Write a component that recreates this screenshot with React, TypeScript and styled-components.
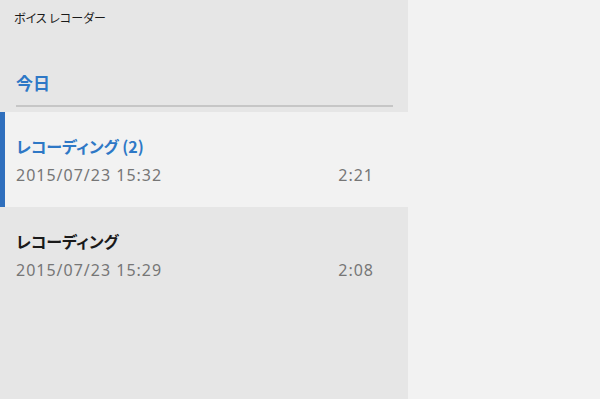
import React from "react";
import styled, { createGlobalStyle } from "styled-components";

const Global = createGlobalStyle`
  html, body { margin: 0; padding: 0; background: #f2f2f2; }
  body { font-family: "Noto Sans", "Noto Sans CJK JP", sans-serif; }
`;

const Page = styled.div`
  display: flex;
  width: 600px;
  height: 399px;
  background: #f2f2f2;
  overflow: hidden;
`;

const Sidebar = styled.div`
  width: 408px;
  height: 100%;
  background: #e6e6e6;
  display: flex;
  flex-direction: column;
`;

const AppTitle = styled.div`
  font-family: "Noto Sans CJK JP", sans-serif;
  font-feature-settings: "palt";
  font-size: 12px;
  line-height: 16px;
  color: #1a1a1a;
  padding: 10px 0 0 14px;
  height: 26px;
  box-sizing: border-box;
`;

const GroupHeader = styled.div`
  margin: 0 15px 0 16px;
  padding: 45px 0 10px;
  border-bottom: 2px solid #c6c6c6;
  font-family: "Noto Sans CJK JP", sans-serif;
  font-weight: 700;
  font-size: 17px;
  line-height: 24px;
  color: #2e78c6;
`;

const List = styled.div`
  margin-top: 5px;
  display: flex;
  flex-direction: column;
`;

const Item = styled.div<{ $selected?: boolean }>`
  height: 95px;
  box-sizing: border-box;
  background: ${(p) => (p.$selected ? "#f2f2f2" : "transparent")};
  border-left: 5px solid ${(p) => (p.$selected ? "#2f6fbd" : "transparent")};
  padding: 23px 34px 0 11px;
  display: flex;
  flex-direction: column;
  gap: 7px;
`;

const ItemTitle = styled.div<{ $selected?: boolean }>`
  font-family: "Noto Sans CJK JP", sans-serif;
  font-feature-settings: "palt";
  font-weight: 700;
  font-size: 16px;
  line-height: 22px;
  color: ${(p) => (p.$selected ? "#2e78c6" : "#1a1a1a")};
`;

const Meta = styled.div`
  display: flex;
  justify-content: space-between;
  font-family: "Noto Sans", sans-serif;
  font-size: 16px;
  letter-spacing: 1px;
  line-height: 22px;
  color: #767676;
`;

const recordings = [
  { title: "レコーディング (2)", date: "2015/07/23 15:32", dur: "2:21", selected: true },
  { title: "レコーディング", date: "2015/07/23 15:29", dur: "2:08", selected: false },
];

export default function App() {
  return (
    <>
      <Global />
      <Page>
        <Sidebar>
          <AppTitle>ボイス レコーダー</AppTitle>
          <GroupHeader>今日</GroupHeader>
          <List>
            {recordings.map((r) => (
              <Item key={r.date} $selected={r.selected}>
                <ItemTitle $selected={r.selected}>{r.title}</ItemTitle>
                <Meta>
                  <span>{r.date}</span>
                  <span>{r.dur}</span>
                </Meta>
              </Item>
            ))}
          </List>
        </Sidebar>
      </Page>
    </>
  );
}
